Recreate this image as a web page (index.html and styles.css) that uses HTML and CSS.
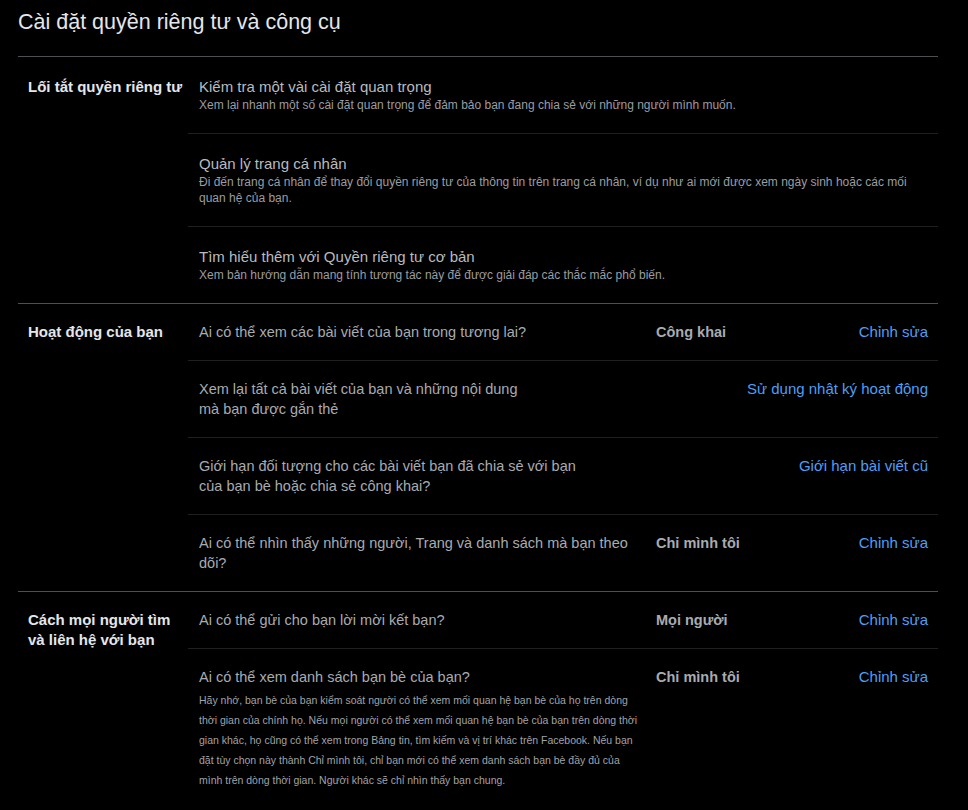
FILE: index.html
```html
<!DOCTYPE html>
<html lang="vi">
<head>
    <meta charset="UTF-8">
    <meta name="viewport" content="width=device-width, initial-scale=1.0">
    <title>Cài đặt quyền riêng tư và công cụ</title>
    <link rel="stylesheet" href="styles.css">
</head>
<body>
    <div class="page">
        <div class="page-header">
            <h1>Cài đặt quyền riêng tư và công cụ</h1>
        </div>

        <!-- Shortcuts -->
        <div class="section">
            <div class="section-label section-label--loose">Lối tắt quyền riêng tư</div>
            <div class="section-body">
                <div class="item">
                    <div class="item-title">Kiểm tra một vài cài đặt quan trọng</div>
                    <div class="item-desc">Xem lại nhanh một số cài đặt quan trọng để đảm bảo bạn đang chia sẻ với những người mình muốn.</div>
                </div>
                <div class="item">
                    <div class="item-title">Quản lý trang cá nhân</div>
                    <div class="item-desc">Đi đến trang cá nhân để thay đổi quyền riêng tư của thông tin trên trang cá nhân, ví dụ như ai mới được xem ngày sinh hoặc các mối quan hệ của bạn.</div>
                </div>
                <div class="item">
                    <div class="item-title">Tìm hiểu thêm với Quyền riêng tư cơ bản</div>
                    <div class="item-desc">Xem bản hướng dẫn mang tính tương tác này để được giải đáp các thắc mắc phổ biến.</div>
                </div>
            </div>
        </div>

        <!-- Your activity -->
        <div class="section">
            <div class="section-label">Hoạt động của bạn</div>
            <div class="section-body">
                <div class="row">
                    <div class="row-question">Ai có thể xem các bài viết của bạn trong tương lai?</div>
                    <div class="row-value">Công khai</div>
                    <a class="row-action" href="#">Chỉnh sửa</a>
                </div>
                <div class="row">
                    <div class="row-question">Xem lại tất cả bài viết của bạn và những nội dung<br>mà bạn được gắn thẻ</div>
                    <div class="row-value"></div>
                    <a class="row-action" href="#">Sử dụng nhật ký hoạt động</a>
                </div>
                <div class="row">
                    <div class="row-question">Giới hạn đối tượng cho các bài viết bạn đã chia sẻ với bạn<br>của bạn bè hoặc chia sẻ công khai?</div>
                    <div class="row-value"></div>
                    <a class="row-action" href="#">Giới hạn bài viết cũ</a>
                </div>
                <div class="row">
                    <div class="row-question">Ai có thể nhìn thấy những người, Trang và danh sách mà bạn theo dõi?</div>
                    <div class="row-value">Chỉ mình tôi</div>
                    <a class="row-action" href="#">Chỉnh sửa</a>
                </div>
            </div>
        </div>

        <!-- How people find you -->
        <div class="section">
            <div class="section-label">Cách mọi người tìm và liên hệ với bạn</div>
            <div class="section-body">
                <div class="row">
                    <div class="row-question">Ai có thể gửi cho bạn lời mời kết bạn?</div>
                    <div class="row-value">Mọi người</div>
                    <a class="row-action" href="#">Chỉnh sửa</a>
                </div>
                <div class="row">
                    <div class="row-question">
                        <div class="row-title">Ai có thể xem danh sách bạn bè của bạn?</div>
                        <p class="row-note">Hãy nhớ, bạn bè của bạn kiểm soát người có thể xem mối quan hệ bạn bè của họ trên dòng thời gian của chính họ. Nếu mọi người có thể xem mối quan hệ bạn bè của bạn trên dòng thời gian khác, họ cũng có thể xem trong Bảng tin, tìm kiếm và vị trí khác trên Facebook. Nếu bạn đặt tùy chọn này thành Chỉ mình tôi, chỉ bạn mới có thể xem danh sách bạn bè đầy đủ của mình trên dòng thời gian. Người khác sẽ chỉ nhìn thấy bạn chung.</p>
                    </div>
                    <div class="row-value">Chỉ mình tôi</div>
                    <a class="row-action" href="#">Chỉnh sửa</a>
                </div>
            </div>
        </div>
    </div>
</body>
</html>
```

FILE: styles.css
```css
/* General Styling */
body {
    background-color: #000000;
    color: #b0b3b8;
    font-family: 'Liberation Sans', Arial, sans-serif;
    margin: 0;
    padding: 0;
}

.page {
    width: 920px;
    margin-left: 18px;
}

.page-header {
    padding: 10px 0 22px;
}

.page-header h1 {
    margin: 0;
    font-size: 21.5px;
    line-height: 24px;
    font-weight: normal;
    color: #e4e6eb;
}

/* Sections */
.section {
    display: flex;
    border-top: 1px solid #4e4f52;
}

.section-label {
    width: 160px;
    flex-shrink: 0;
    padding: 18px 0 0 10px;
    font-size: 15px;
    line-height: 20px;
    font-weight: bold;
    color: #e4e6eb;
}

.section-label--loose {
    padding-top: 20px;
}

.section-body {
    flex: 1;
}

/* Shortcut items */
.item {
    padding: 20px 10px 20px 11px;
}

.item + .item,
.row + .row {
    border-top: 1px solid #1e1f21;
}

.item-title {
    font-size: 15px;
    line-height: 20px;
    color: #b8bbbf;
}

.item-desc {
    font-size: 12px;
    line-height: 16px;
    color: #9a9da2;
}

/* Setting rows */
.row {
    display: grid;
    grid-template-columns: 445px 1fr auto;
    column-gap: 12px;
    padding: 18px 10px 18px 11px;
    font-size: 14.5px;
    line-height: 20px;
}

.row-question {
    color: #a8abb0;
}

.row-note {
    margin: 3px 0 0;
    font-size: 10.5px;
    line-height: 20px;
    color: #a0a3a8;
}

.row-value {
    font-weight: bold;
    color: #a8abb0;
}

.row-action {
    font-size: 15px;
    color: #4f9ef5;
    text-decoration: none;
    text-align: right;
}

.row-action:hover {
    text-decoration: underline;
}
```
